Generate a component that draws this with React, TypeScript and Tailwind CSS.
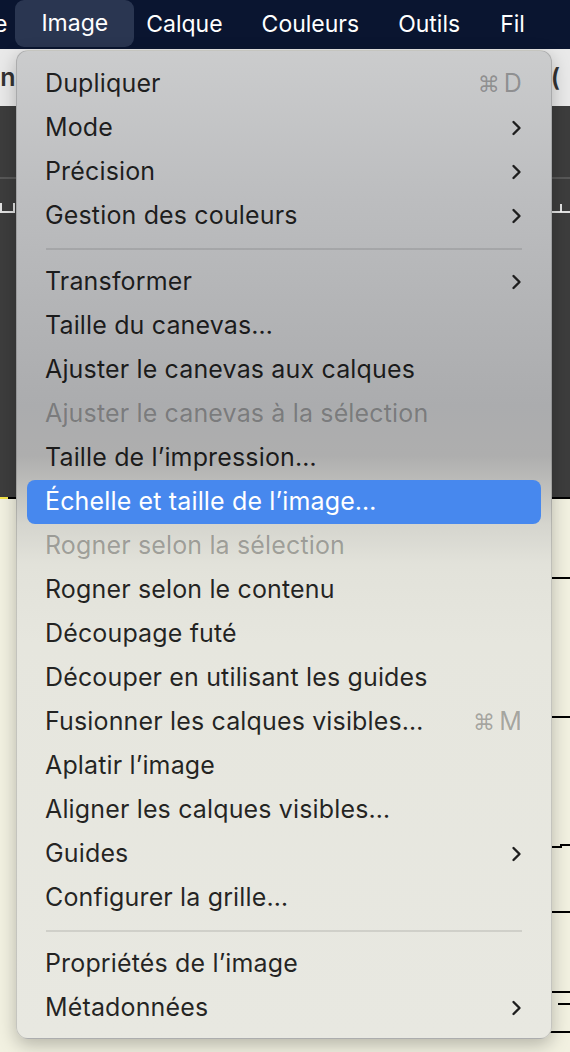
import React from "react";

type Item =
  | { kind: "sep" }
  | {
      kind: "item";
      label: string;
      sub?: boolean;
      shortcut?: [string, string];
      disabled?: boolean;
      active?: boolean;
    };

const items: Item[] = [
  { kind: "item", label: "Dupliquer", shortcut: ["⌘", "D"] },
  { kind: "item", label: "Mode", sub: true },
  { kind: "item", label: "Précision", sub: true },
  { kind: "item", label: "Gestion des couleurs", sub: true },
  { kind: "sep" },
  { kind: "item", label: "Transformer", sub: true },
  { kind: "item", label: "Taille du canevas…" },
  { kind: "item", label: "Ajuster le canevas aux calques" },
  { kind: "item", label: "Ajuster le canevas à la sélection", disabled: true },
  { kind: "item", label: "Taille de l’impression…" },
  { kind: "item", label: "Échelle et taille de l’image…", active: true },
  { kind: "item", label: "Rogner selon la sélection", disabled: true },
  { kind: "item", label: "Rogner selon le contenu" },
  { kind: "item", label: "Découpage futé" },
  { kind: "item", label: "Découper en utilisant les guides" },
  { kind: "item", label: "Fusionner les calques visibles…", shortcut: ["⌘", "M"] },
  { kind: "item", label: "Aplatir l’image" },
  { kind: "item", label: "Aligner les calques visibles…" },
  { kind: "item", label: "Guides", sub: true },
  { kind: "item", label: "Configurer la grille…" },
  { kind: "sep" },
  { kind: "item", label: "Propriétés de l’image" },
  { kind: "item", label: "Métadonnées", sub: true },
];

function Chevron() {
  return (
    <svg width="11" height="16" viewBox="0 0 11 16" fill="none" className="text-[#1e1e1e]">
      <path d="M2.5 2 L8.5 8 L2.5 14" stroke="currentColor" strokeWidth="2.4" strokeLinecap="round" strokeLinejoin="round" />
    </svg>
  );
}

function MenuRow({ item }: { item: Item }) {
  if (item.kind === "sep") {
    return (
      <div className="flex h-[22px] items-center px-[29px]">
        <div className="h-[2px] w-full bg-black/10" />
      </div>
    );
  }
  const text = item.active
    ? "text-white"
    : item.disabled
      ? "text-black/30"
      : "text-black/85";
  return (
    <div
      className={`mx-[10px] flex h-[44px] items-center justify-between rounded-[8px] pl-[18px] pr-[19px] text-[25px] tracking-[0.15px] ${text} ${
        item.active ? "bg-[#4788ee]" : ""
      }`}
    >
      <span className="whitespace-nowrap">{item.label}</span>
      {item.sub && <Chevron />}
      {item.shortcut && (
        <span className="flex items-center gap-[4px] text-black/30">
          <span className="font-['DejaVu_Sans'] text-[22px]">{item.shortcut[0]}</span>
          <span>{item.shortcut[1]}</span>
        </span>
      )}
    </div>
  );
}

export default function App() {
  return (
    <div className="relative h-[1052px] w-[570px] overflow-hidden bg-[#f2f1e1] font-['Inter','Noto_Sans',sans-serif]">
      {/* menu bar */}
      <div className="flex h-[49px] items-center whitespace-nowrap bg-[#0a1530] text-[23px] text-white">
        <span className="-ml-[6px]">e</span>
        <span className="ml-[8px] flex h-[47px] items-center self-start rounded-[9px] bg-[#2a3651] px-[26px]">Image</span>
        <span className="ml-[12px]">Calque</span>
        <span className="ml-[39px]">Couleurs</span>
        <span className="ml-[39px]">Outils</span>
        <span className="ml-[40px]">Fil</span>
      </div>

      {/* toolbar */}
      <div className="flex h-[57px] items-center justify-between bg-[#e9e9e9] text-[25px] font-semibold text-[#333]">
        <span className="-ml-[14px]">an</span>
        <span className="mr-[10px]">(</span>
      </div>

      {/* dark workspace */}
      <div className="relative h-[392px] bg-[#3d3d3d] pt-[71px]">
        <div className="h-[2px] bg-[#585858]" />
        <div className="absolute left-0 top-[97px] h-[10px] w-[15px] border-b-2 border-l-2 border-r-2 border-white/85" />
        <div className="absolute right-0 top-[105px] h-[2px] w-[18px] bg-white/85" />
        <div className="absolute right-[8px] top-[98px] h-[8px] w-[2px] bg-white/85" />
      </div>

      {/* canvas guide lines on right */}
      <div className="absolute left-0 top-[497px] h-[2px] w-[570px] bg-black">
        <div className="h-[2px] w-[8px] bg-[#f5e64a]" />
      </div>
      <div className="absolute right-0 top-[577px] h-[2px] w-[20px] bg-black" />
      <div className="absolute right-0 top-[716px] h-[2px] w-[20px] bg-black" />
      <div className="absolute right-0 top-[844px] h-[2px] w-[10px] bg-black" />
      <div className="absolute right-[8px] top-[846px] h-[2px] w-[12px] bg-black" />
      <div className="absolute right-0 top-[911px] h-[2px] w-[20px] bg-black" />
      <div className="absolute right-0 top-[991px] h-[2px] w-[20px] bg-black" />
      <div className="absolute right-0 top-[1003px] h-[2px] w-[12px] bg-black" />
      <div className="absolute right-0 top-[1031px] h-[2px] w-[20px] bg-black" />

      {/* dropdown menu */}
      <div className="absolute left-[16px] top-[50px] w-[536px] rounded-[12px] border border-black/15 bg-[linear-gradient(to_bottom,#cbcccd_0%,#bcbdbf_15%,#abacae_36%,#aeaeae_41%,#bebebb_44%,#d5d5ce_48%,#e2e2da_52%,#e6e6de_60%,#e8e8e1_100%)] pb-[8px] pt-[11px] shadow-[0_6px_18px_rgba(0,0,0,0.25)]">
        {items.map((item, i) => (
          <MenuRow key={i} item={item} />
        ))}
      </div>
    </div>
  );
}
